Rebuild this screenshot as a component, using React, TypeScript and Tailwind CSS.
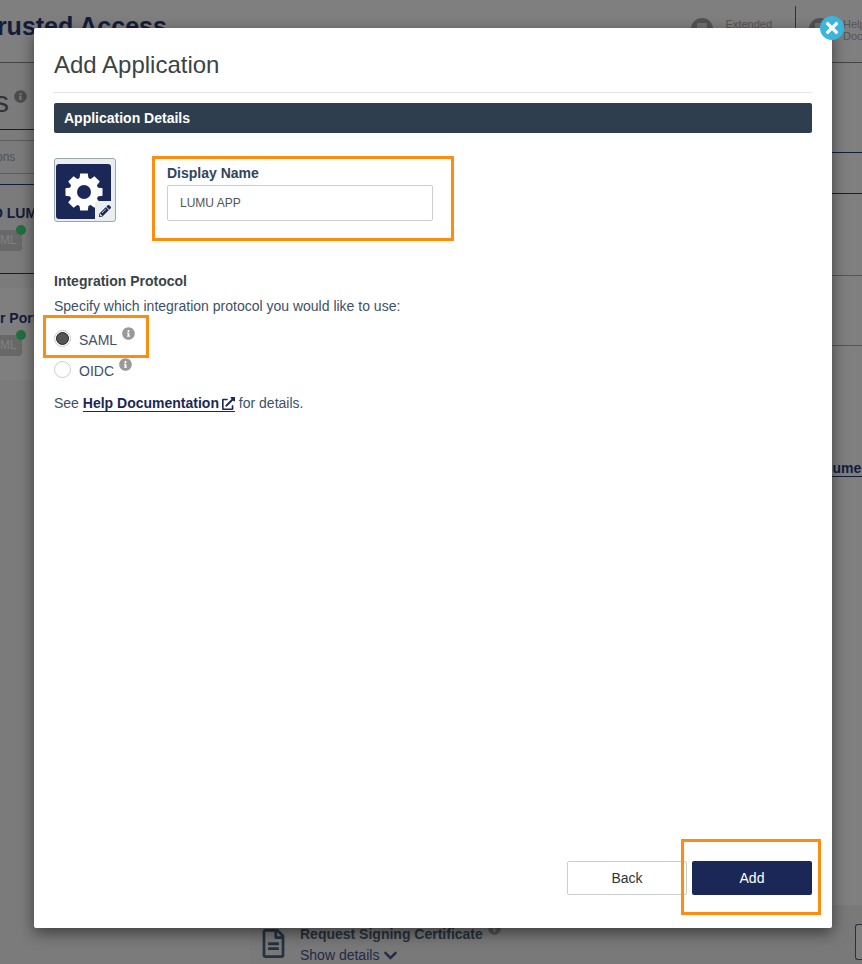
import {
  FaChevronDown,
  FaExternalLinkAlt,
  FaInfoCircle,
  FaPencilAlt,
  FaRegFileAlt,
  FaTimes,
} from "react-icons/fa";

function GearIcon() {
  const teeth = [0, 45, 90, 135, 180, 225, 270, 315];
  return (
    <svg viewBox="0 0 40 40" className="size-[40px]">
      {teeth.map((angle) => (
        <path key={angle} d="M16.2 1.5h7.6l1 7h-9.6z" fill="#fff" transform={`rotate(${angle} 20 20)`} />
      ))}
      <circle cx="20" cy="20" r="14.5" fill="#fff" />
      <circle cx="20" cy="20" r="7" fill="#1b2857" />
    </svg>
  );
}

function HeaderBadge() {
  return (
    <span className="flex size-[22px] shrink-0 items-start justify-center rounded-full bg-[#a2a6a8] pt-[5px]">
      <span className="h-[6px] w-[10px] rounded-[1px] bg-[#e0e0e0]" />
    </span>
  );
}

function AppBadge() {
  return (
    <div className="relative mt-[9px] w-[22px] rounded-r-[3px] bg-[#d0d0d0] py-[3px] pr-[8px] text-right text-[12px] leading-[15px] text-white">
      ML
      <span className="absolute right-[-4px] top-[-5px] size-[10px] rounded-full bg-[#3ee080]" />
    </div>
  );
}

function Background() {
  return (
    <div className="flex h-full flex-col bg-white text-[#2a3a78]">
      <header className="flex h-[63px] shrink-0 items-start border-b border-[#888]">
        <h1 className="ml-[-17px] mt-[9px] whitespace-nowrap text-[25px] font-bold leading-[34px]">Trusted Access</h1>
        <div className="ml-auto flex">
          <div className="flex items-start pr-[23px] pt-[18px]">
            <HeaderBadge />
            <span className="ml-[13px] mt-0 text-[11px] leading-[13px] text-[#aaa]">Extended</span>
          </div>
          <div className="mt-[6px] flex w-[67px] items-start border-l border-[#666] pl-[13px] pt-[12px]">
            <HeaderBadge />
            <span className="ml-[12px] text-[11px] leading-[12px] text-[#aaa]">Help Docs</span>
          </div>
        </div>
      </header>
      <div className="flex min-h-0 flex-1">
        <aside className="w-[250px] shrink-0 overflow-hidden bg-[#f7f7f7]">
          <div className="flex h-[67px] items-start border-b border-[#2a3a78] pt-[23px] text-[#666]">
            <span className="ml-[-6px] text-[30px] leading-[32px]">s</span>
            <FaInfoCircle className="ml-[5px] mt-[4px] text-[13px] text-[#999]" />
          </div>
          <div className="mt-[10px] h-[34px] border-y border-[#bbb] pt-[8px] text-[12px] leading-[16px] text-[#a5a5a5]">
            <span className="ml-[-4px]">ons</span>
          </div>
          <div className="mt-[10px] h-[90px] border-y border-[#2a3a78] pt-[20px]">
            <p className="ml-[-8px] whitespace-nowrap text-[14px] font-bold leading-[16px]">O LUMU APP</p>
            <AppBadge />
          </div>
          <div className="mt-[14px] h-[92px] bg-white pt-[22px]">
            <p className="whitespace-nowrap text-[14px] font-bold leading-[16px]">r Portal</p>
            <AppBadge />
          </div>
        </aside>
        <main className="flex min-w-0 flex-1 flex-col overflow-hidden">
          <div className="mt-[89px] h-[42px] border-y border-[#2a3a78]" />
          <div className="mt-[81px] h-[71px] border-y border-[#aaa]" />
          <div className="ml-[556px] mt-[114px]">
            <span className="block w-fit whitespace-nowrap border-b border-[#2a3a78] text-[14px] font-bold leading-[16px]">Documentation</span>
          </div>
          <div className="mt-[428px] flex flex-1 items-start bg-[#f2f2f2] pl-[9px] pt-[21px]">
            <FaRegFileAlt className="mt-[3px] text-[29px] text-[#4a6484]" />
            <div className="ml-[12px]">
              <p className="flex items-start whitespace-nowrap text-[14px] font-bold leading-[16px] text-[#50647e]">
                Request Signing Certificate
                <FaInfoCircle className="ml-[5px] mt-[-4px] text-[13px] text-[#aaa]" />
              </p>
              <p className="mt-[5px] flex items-center gap-[4px] whitespace-nowrap text-[14px] leading-[16px] text-[#46548a]">
                Show details <FaChevronDown className="text-[15px]" />
              </p>
            </div>
            <div className="ml-auto mt-[-2px] h-[36px] w-[7px] rounded-l-[3px] border-y border-l border-[#50647e] bg-white" />
          </div>
        </main>
      </div>
    </div>
  );
}

function Radio({ checked }: { checked?: boolean }) {
  return (
    <span className="flex size-[17px] shrink-0 items-center justify-center rounded-full border border-[#ccc] bg-white">
      {checked && <span className="size-[13px] rounded-full border border-[#222] bg-[#555]" />}
    </span>
  );
}

function Modal() {
  return (
    <div className="absolute left-[34px] top-[28px] flex h-[900px] w-[798px] flex-col rounded-[2px] bg-white px-[20px] shadow-[0_5px_15px_rgba(0,0,0,0.5)]">
      <div className="flex h-[65px] shrink-0 items-end border-b border-[#e5e5e5] pb-[3px]">
        <h2 className="text-[24px] leading-[48px] text-[#3a4347]">Add Application</h2>
      </div>
      <div className="mt-[10px] flex h-[30px] shrink-0 items-center rounded-[2px] bg-[#2e3e4e] px-[10px] text-[14px] font-bold text-white">
        Application Details
      </div>

      <div className="mt-[25px] flex h-[83px] shrink-0">
        <div className="relative h-[64px] w-[62px] shrink-0 rounded-[3px] border border-[#9aa7ab] bg-[#eaeeef] pl-[1px] pt-[5px]">
          <div className="flex h-[55px] w-[55px] items-center justify-center rounded-[3px] bg-[#1b2857]">
            <GearIcon />
          </div>
          <span className="absolute bottom-[1px] right-[1px] flex size-[19px] items-center justify-center rounded-tl-[3px] bg-[#eaeeef]">
            <FaPencilAlt className="text-[12px] text-[#1b2857]" />
          </span>
        </div>
        <div className="ml-[51px] w-[266px]">
          <label className="block pt-[6px] text-[14px] font-bold leading-[18px] text-[#2e4560]">Display Name</label>
          <div className="mt-[3px] flex h-[36px] items-center rounded-[2px] border border-[#ccc] bg-white px-[12px] text-[12px] text-[#555]">
            LUMU APP
          </div>
        </div>
      </div>

      <h3 className="mt-[31px] text-[14px] font-bold leading-[18px] text-[#3a4347]">Integration Protocol</h3>
      <p className="mt-[7px] text-[14px] leading-[18px] text-[#3e5068]">Specify which integration protocol you would like to use:</p>

      <div className="mt-[14px] flex h-[18px] items-center text-[14px] text-[#3e5068]">
        <Radio checked />
        <span className="ml-[8px] mt-[5px]">SAML</span>
        <FaInfoCircle className="mb-[10px] ml-[5px] text-[13px] text-[#999]" />
      </div>
      <div className="mt-[13px] flex h-[18px] items-center text-[14px] text-[#3e5068]">
        <Radio />
        <span className="ml-[8px] mt-[5px]">OIDC</span>
        <FaInfoCircle className="mb-[10px] ml-[5px] text-[13px] text-[#999]" />
      </div>

      <p className="mt-[16px] text-[14px] leading-[18px] text-[#3e5068]">
        See{" "}
        <span className="inline-flex items-center gap-[3px] border-b border-[#1b2857] font-bold leading-[16px] text-[#1b2857]">
          Help Documentation
          <FaExternalLinkAlt className="text-[13px]" />
        </span>{" "}
        for details.
      </p>

      <div className="mb-[33px] mt-auto flex justify-end gap-[5px] text-[14px]">
        <div className="flex h-[34px] w-[120px] items-center justify-center rounded-[2px] border border-[#ccc] bg-white text-[#333]">Back</div>
        <div className="flex h-[34px] w-[120px] items-center justify-center rounded-[2px] bg-[#1b2857] text-white">Add</div>
      </div>
    </div>
  );
}

export default function App() {
  return (
    <div className="relative h-[964px] w-[862px] overflow-hidden font-['Liberation_Sans',Arial,sans-serif]">
      <Background />
      <div className="absolute inset-0 bg-black/50" />
      <Modal />
      <button className="absolute left-[820px] top-[16px] flex size-[24px] items-center justify-center rounded-full bg-[#3bb5dc] text-white">
        <FaTimes className="text-[18px]" />
      </button>
      {/* orange callouts added on top of the screenshot */}
      <div className="absolute left-[152px] top-[156px] h-[85px] w-[302px] border-[3px] border-[#ff8c0f]" />
      <div className="absolute left-[43px] top-[315px] h-[43px] w-[106px] border-[3px] border-[#ff8c0f]" />
      <div className="absolute left-[681px] top-[839px] h-[76px] w-[140px] border-[3px] border-[#ff8c0f]" />
    </div>
  );
}
